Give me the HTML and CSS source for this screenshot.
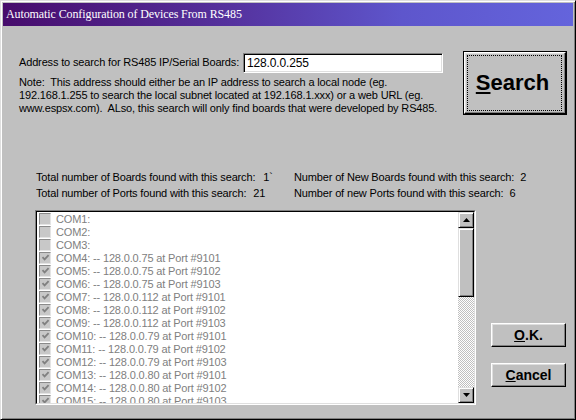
FILE: index.html
```html
<!DOCTYPE html>
<html>
<head>
<meta charset="utf-8">
<link rel="stylesheet" href="styles.css">
</head>
<body>
<div class="window">
  <div class="titlebar"><span>Automatic Configuration of Devices From RS485</span></div>
  <div class="content">
    <div class="top">
      <div class="addr-col">
        <div class="addr-row">
          <span class="addr-label">Address to search for RS485 IP/Serial Boards:</span>
          <div class="textbox">128.0.0.255</div>
        </div>
        <p class="note">Note:&nbsp; This address should either be an IP address to search a local node (eg.<br>192.168.1.255 to search the local subnet located at 192.168.1.xxx) or a web URL (eg.<br>www.espsx.com).&nbsp; ALso, this search will only find boards that were developed by RS485.</p>
      </div>
      <div class="search">
        <div class="raised">
          <div class="focus"><u>S</u>earch</div>
        </div>
      </div>
    </div>
    <div class="stats">
      <div class="stat">Total number of Boards found with this search:<span class="val v1">1`</span></div>
      <div class="stat">Number of New Boards found with this search:<span class="val v3">2</span></div>
      <div class="stat">Total number of Ports found with this search:<span class="val v2">21</span></div>
      <div class="stat">Number of new Ports found with this search:<span class="val v3">6</span></div>
    </div>
    <div class="bottom">
      <div class="listbox">
        <div class="listbox-inner">
          <div class="items">
            <div class="row"><span class="chk"></span><span>COM1:</span></div>
            <div class="row"><span class="chk"></span><span>COM2:</span></div>
            <div class="row"><span class="chk"></span><span>COM3:</span></div>
            <div class="row"><span class="chk on"><svg viewBox="0 0 9 9" width="9" height="9"><polyline points="1.5,4.2 3.6,6.4 7.6,2.2"/></svg></span><span>COM4: -- 128.0.0.75 at Port #9101</span></div>
            <div class="row"><span class="chk on"><svg viewBox="0 0 9 9" width="9" height="9"><polyline points="1.5,4.2 3.6,6.4 7.6,2.2"/></svg></span><span>COM5: -- 128.0.0.75 at Port #9102</span></div>
            <div class="row"><span class="chk on"><svg viewBox="0 0 9 9" width="9" height="9"><polyline points="1.5,4.2 3.6,6.4 7.6,2.2"/></svg></span><span>COM6: -- 128.0.0.75 at Port #9103</span></div>
            <div class="row"><span class="chk on"><svg viewBox="0 0 9 9" width="9" height="9"><polyline points="1.5,4.2 3.6,6.4 7.6,2.2"/></svg></span><span>COM7: -- 128.0.0.112 at Port #9101</span></div>
            <div class="row"><span class="chk on"><svg viewBox="0 0 9 9" width="9" height="9"><polyline points="1.5,4.2 3.6,6.4 7.6,2.2"/></svg></span><span>COM8: -- 128.0.0.112 at Port #9102</span></div>
            <div class="row"><span class="chk on"><svg viewBox="0 0 9 9" width="9" height="9"><polyline points="1.5,4.2 3.6,6.4 7.6,2.2"/></svg></span><span>COM9: -- 128.0.0.112 at Port #9103</span></div>
            <div class="row"><span class="chk on"><svg viewBox="0 0 9 9" width="9" height="9"><polyline points="1.5,4.2 3.6,6.4 7.6,2.2"/></svg></span><span>COM10: -- 128.0.0.79 at Port #9101</span></div>
            <div class="row"><span class="chk on"><svg viewBox="0 0 9 9" width="9" height="9"><polyline points="1.5,4.2 3.6,6.4 7.6,2.2"/></svg></span><span>COM11: -- 128.0.0.79 at Port #9102</span></div>
            <div class="row"><span class="chk on"><svg viewBox="0 0 9 9" width="9" height="9"><polyline points="1.5,4.2 3.6,6.4 7.6,2.2"/></svg></span><span>COM12: -- 128.0.0.79 at Port #9103</span></div>
            <div class="row"><span class="chk on"><svg viewBox="0 0 9 9" width="9" height="9"><polyline points="1.5,4.2 3.6,6.4 7.6,2.2"/></svg></span><span>COM13: -- 128.0.0.80 at Port #9101</span></div>
            <div class="row"><span class="chk on"><svg viewBox="0 0 9 9" width="9" height="9"><polyline points="1.5,4.2 3.6,6.4 7.6,2.2"/></svg></span><span>COM14: -- 128.0.0.80 at Port #9102</span></div>
            <div class="row"><span class="chk on"><svg viewBox="0 0 9 9" width="9" height="9"><polyline points="1.5,4.2 3.6,6.4 7.6,2.2"/></svg></span><span>COM15: -- 128.0.0.80 at Port #9103</span></div>
          </div>
          <div class="scrollbar">
            <div class="sb-btn"><svg viewBox="0 0 7 4" width="7" height="4"><polygon points="3.5,0 7,4 0,4"/></svg></div>
            <div class="sb-btn thumb"></div>
            <div class="track"></div>
            <div class="sb-btn"><svg viewBox="0 0 7 4" width="7" height="4"><polygon points="0,0 7,0 3.5,4"/></svg></div>
          </div>
        </div>
      </div>
      <div class="side-buttons">
        <div class="btn"><u>O</u>.K.</div>
        <div class="btn"><u>C</u>ancel</div>
      </div>
    </div>
  </div>
</div>
</body>
</html>
```
FILE: styles.css
```css
html, body {
  margin: 0;
  padding: 0;
}
body {
  width: 576px;
  height: 420px;
  background: #c0c0c0;
  font-family: "Liberation Sans", Arial, sans-serif;
  font-size: 11px;
  letter-spacing: -0.15px;
  color: #000;
  overflow: hidden;
}
.window {
  box-sizing: border-box;
  width: 576px;
  height: 420px;
  background: #c0c0c0;
  border: 1px solid;
  border-color: #dfdfdf #000 #000 #dfdfdf;
  box-shadow: inset 1px 1px #fff, inset -1px -1px #808080;
  padding: 2px;
}
.titlebar {
  height: 23px;
  display: flex;
  align-items: center;
  padding-left: 3px;
  background: linear-gradient(to right, #470c6c 0%, #55329e 40%, #5e56cc 70%, #6464dc 100%);
  color: #fff;
  font-family: "Liberation Serif", "Times New Roman", serif;
  font-size: 12px;
  letter-spacing: -0.1px;
}
.top {
  display: flex;
  margin-top: 25px;
  padding-left: 16px;
  height: 64px;
}
.addr-col {
  width: 444px;
}
.addr-row {
  display: flex;
  align-items: center;
  height: 22px;
}
.addr-label {
  width: 224px;
  white-space: nowrap;
}
.textbox {
  box-sizing: border-box;
  width: 200px;
  height: 20px;
  margin-top: 1px;
  background: #fff;
  border: 1px solid;
  border-color: #808080 #fff #fff #808080;
  box-shadow: inset 1px 1px #000, inset -1px -1px #dfdfdf;
  padding: 0 3px;
  line-height: 18px;
  font-size: 12px;
}
.note {
  margin: 3px 0 0;
  line-height: 13px;
  white-space: nowrap;
}
.search {
  box-sizing: border-box;
  width: 104px;
  height: 64px;
  border: 1px solid #000;
}
.raised {
  box-sizing: border-box;
  height: 100%;
  border: 1px solid;
  border-color: #fff #000 #000 #fff;
  box-shadow: inset -1px -1px #808080, inset 1px 1px #dfdfdf;
  padding: 2px 3px 2px 2px;
}
.focus {
  box-sizing: border-box;
  height: 100%;
  border: 1px dotted #000;
  display: flex;
  align-items: center;
  justify-content: center;
  font-weight: bold;
  font-size: 22px;
  letter-spacing: 0;
  padding-right: 4px;
}
.stats {
  display: grid;
  grid-template-columns: 258px auto;
  margin-top: 54px;
  padding-left: 33px;
  line-height: 16px;
}
.stat {
  white-space: nowrap;
}
.val.v1 {
  margin-left: 8px;
}
.val.v2 {
  margin-left: 7px;
}
.val.v3 {
  margin-left: 6px;
}
.bottom {
  display: flex;
  margin-top: 9px;
  padding-left: 32px;
}
.listbox {
  box-sizing: border-box;
  width: 441px;
  height: 195px;
  border: 1px solid;
  border-color: #808080 #fff #fff #808080;
}
.listbox-inner {
  box-sizing: border-box;
  height: 100%;
  border: 1px solid;
  border-color: #000 #dfdfdf #dfdfdf #000;
  background: #fff;
  display: flex;
}
.items {
  flex: 1;
  overflow: hidden;
  color: #808080;
}
.row {
  display: flex;
  align-items: center;
  height: 13px;
  white-space: nowrap;
}
.chk {
  box-sizing: border-box;
  width: 12px;
  height: 12px;
  margin: 0 5px 0 2px;
  background: #c8c8c8;
  border: 1px solid;
  border-color: #8a8a8a #e4e4e4 #e4e4e4 #8a8a8a;
  display: flex;
  align-items: center;
  justify-content: center;
}
.chk svg polyline {
  fill: none;
  stroke: #808080;
  stroke-width: 1.8;
}
.scrollbar {
  width: 16px;
  display: flex;
  flex-direction: column;
}
.sb-btn {
  box-sizing: border-box;
  width: 16px;
  height: 16px;
  flex: none;
  background: #c0c0c0;
  border: 1px solid;
  border-color: #dfdfdf #000 #000 #dfdfdf;
  box-shadow: inset 1px 1px #fff, inset -1px -1px #808080;
  display: flex;
  align-items: center;
  justify-content: center;
}
.sb-btn svg polygon {
  fill: #000;
}
.thumb {
  height: 69px;
}
.track {
  flex: 1;
  background: repeating-conic-gradient(#c0c0c0 0 25%, #fff 0 50%) 0 0 / 2px 2px;
}
.side-buttons {
  display: flex;
  flex-direction: column;
  gap: 16px;
  margin-left: 15px;
  padding-top: 113px;
}
.btn {
  box-sizing: border-box;
  width: 75px;
  height: 24px;
  background: #c0c0c0;
  border: 1px solid;
  border-color: #fff #000 #000 #fff;
  box-shadow: inset -1px -1px #808080, inset 1px 1px #dfdfdf;
  display: flex;
  align-items: center;
  justify-content: center;
  font-weight: bold;
  font-size: 14px;
  letter-spacing: 0;
}
```
